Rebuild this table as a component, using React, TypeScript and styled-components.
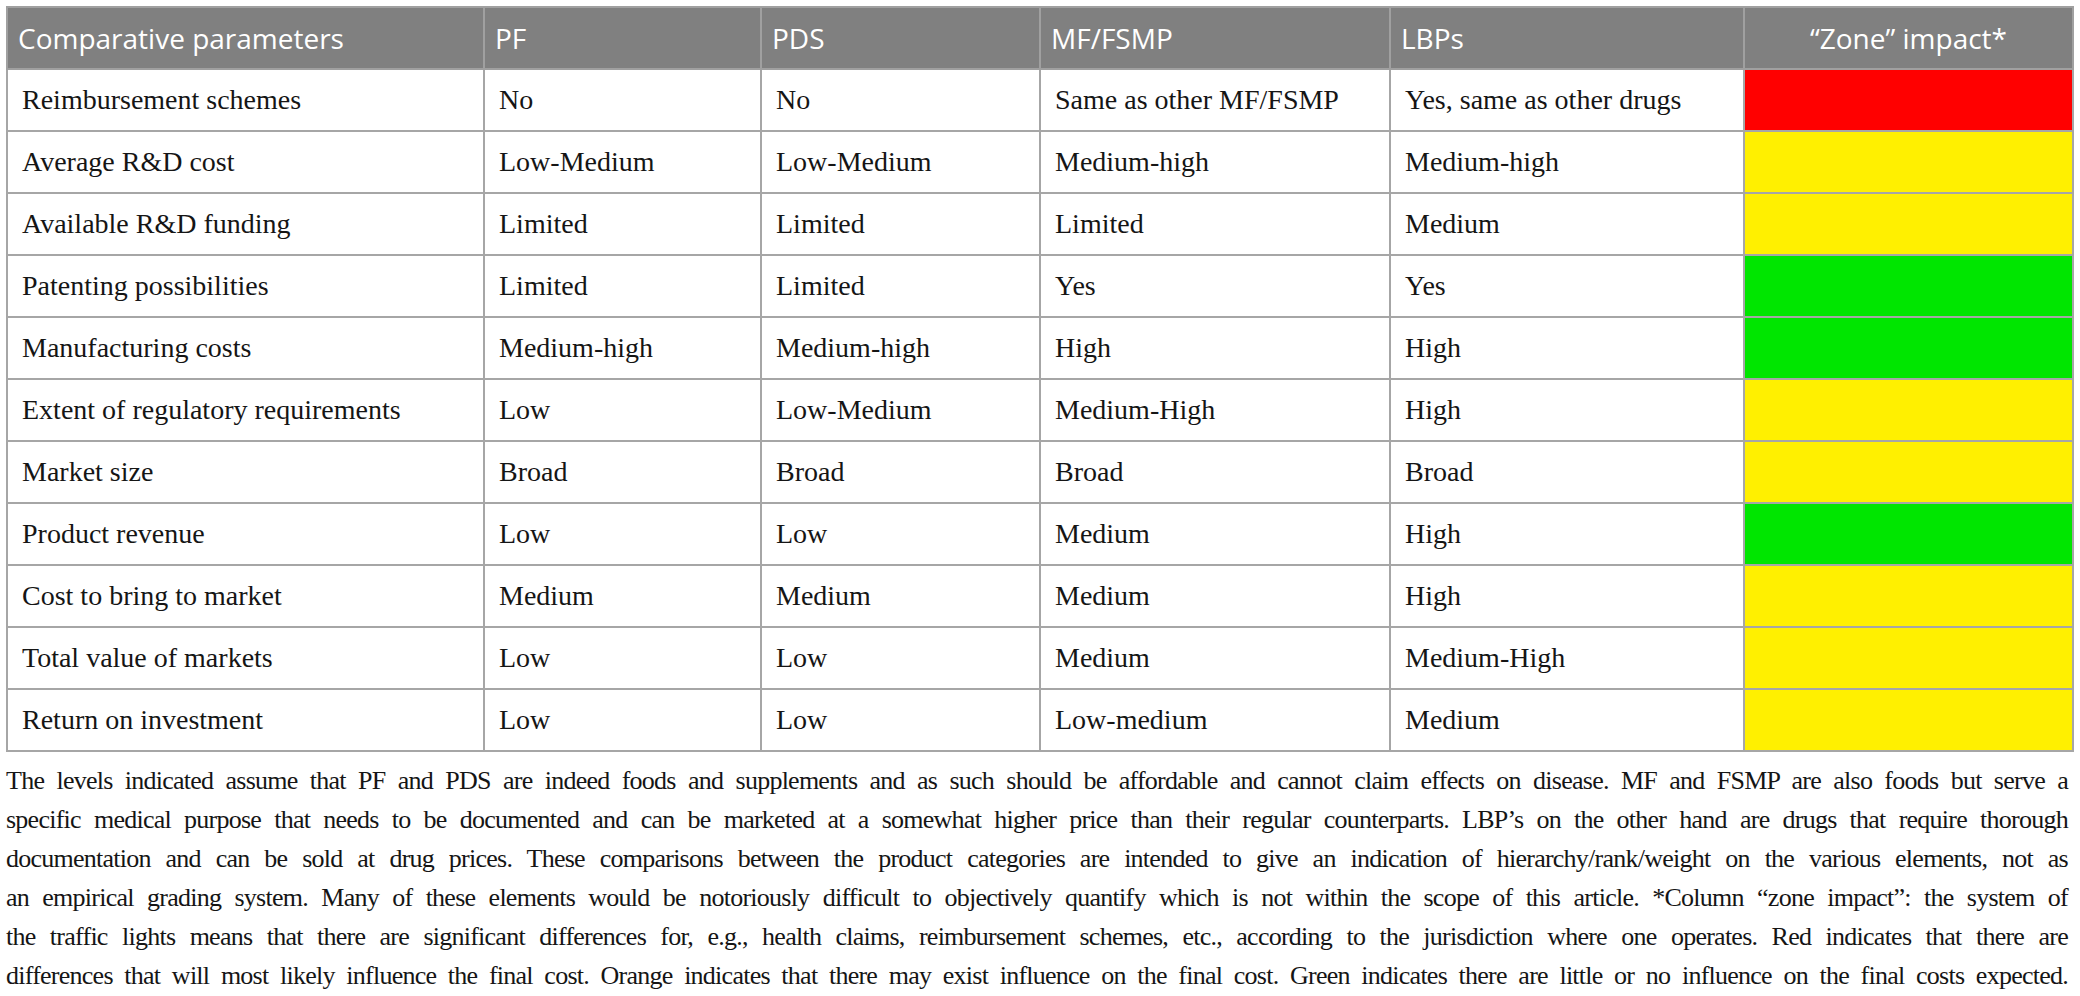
import React from 'react';
import styled, { createGlobalStyle } from 'styled-components';

const GlobalStyle = createGlobalStyle`
  html, body {
    margin: 0;
    padding: 0;
    background: #fff;
  }
`;

// Page wrapper around the table and its footnote
const Page = styled.div`
  padding: 6px 8px 0 6px;
  width: 2080px;
  box-sizing: border-box;
`;

const Table = styled.table`
  width: 2066px;
  border-collapse: collapse;
  table-layout: fixed;
  border: 2px solid #a6a6a6;
`;

const HeadCell = styled.th<{ $center?: boolean }>`
  height: 60px;
  padding: 0 10px;
  background-color: #808080;
  color: #fff;
  font-family: 'Open Sans', 'Noto Sans', sans-serif;
  font-size: 28px;
  font-weight: 400;
  text-align: ${(p) => (p.$center ? 'center' : 'left')};
  border: 2px solid #a0a0a0;
  white-space: nowrap;
`;

const Cell = styled.td`
  height: 60px;
  padding: 0 14px;
  font-family: 'Liberation Serif', 'Times New Roman', serif;
  font-size: 28px;
  color: #151515;
  border: 2px solid #a6a6a6;
  white-space: nowrap;
`;

// Traffic light cell for the zone impact column
const ZoneCell = styled.td<{ $zone: Zone }>`
  height: 60px;
  padding: 0;
  border: 2px solid #a6a6a6;
  background-color: ${(p) => zoneColors[p.$zone]};
`;

const Footnote = styled.div`
  margin-top: 9px;
  width: 2062px;
  font-family: 'Liberation Serif', 'Times New Roman', serif;
  font-size: 26px;
  letter-spacing: -0.75px;
  line-height: 39px;
  color: #151515;
`;

// Each printed line is justified to the full width
const FootLine = styled.div`
  white-space: nowrap;
  text-align: justify;
  text-align-last: justify;
`;

type Zone = 'red' | 'yellow' | 'green';

const zoneColors: Record<Zone, string> = {
  red: '#ff0000',
  yellow: '#fff000',
  green: '#00e600',
};

interface Row {
  label: string;
  pf: string;
  pds: string;
  mf: string;
  lbp: string;
  zone: Zone;
}

const rows: Row[] = [
  { label: 'Reimbursement schemes', pf: 'No', pds: 'No', mf: 'Same as other MF/FSMP', lbp: 'Yes, same as other drugs', zone: 'red' },
  { label: 'Average R&D cost', pf: 'Low-Medium', pds: 'Low-Medium', mf: 'Medium-high', lbp: 'Medium-high', zone: 'yellow' },
  { label: 'Available R&D funding', pf: 'Limited', pds: 'Limited', mf: 'Limited', lbp: 'Medium', zone: 'yellow' },
  { label: 'Patenting possibilities', pf: 'Limited', pds: 'Limited', mf: 'Yes', lbp: 'Yes', zone: 'green' },
  { label: 'Manufacturing costs', pf: 'Medium-high', pds: 'Medium-high', mf: 'High', lbp: 'High', zone: 'green' },
  { label: 'Extent of regulatory requirements', pf: 'Low', pds: 'Low-Medium', mf: 'Medium-High', lbp: 'High', zone: 'yellow' },
  { label: 'Market size', pf: 'Broad', pds: 'Broad', mf: 'Broad', lbp: 'Broad', zone: 'yellow' },
  { label: 'Product revenue', pf: 'Low', pds: 'Low', mf: 'Medium', lbp: 'High', zone: 'green' },
  { label: 'Cost to bring to market', pf: 'Medium', pds: 'Medium', mf: 'Medium', lbp: 'High', zone: 'yellow' },
  { label: 'Total value of markets', pf: 'Low', pds: 'Low', mf: 'Medium', lbp: 'Medium-High', zone: 'yellow' },
  { label: 'Return on investment', pf: 'Low', pds: 'Low', mf: 'Low-medium', lbp: 'Medium', zone: 'yellow' },
];

const footLines = [
  'The levels indicated assume that PF and PDS are indeed foods and supplements and as such should be affordable and cannot claim effects on disease. MF and FSMP are also foods but serve a',
  'specific medical purpose that needs to be documented and can be marketed at a somewhat higher price than their regular counterparts. LBP’s on the other hand are drugs that require thorough',
  'documentation and can be sold at drug prices. These comparisons between the product categories are intended to give an indication of hierarchy/rank/weight on the various elements, not as',
  'an empirical grading system. Many of these elements would be notoriously difficult to objectively quantify which is not within the scope of this article. *Column “zone impact”: the system of',
  'the traffic lights means that there are significant differences for, e.g., health claims, reimbursement schemes, etc., according to the jurisdiction where one operates. Red indicates that there are',
  'differences that will most likely influence the final cost. Orange indicates that there may exist influence on the final cost. Green indicates there are little or no influence on the final costs expected.',
];

const colWidths = [477, 277, 279, 350, 354, 329];

const App: React.FC = () => {
  return (
    <Page>
      <GlobalStyle />
      <Table>
        <colgroup>
          {colWidths.map((w, i) => (
            <col key={i} style={{ width: w }} />
          ))}
        </colgroup>
        <thead>
          <tr>
            <HeadCell>Comparative parameters</HeadCell>
            <HeadCell>PF</HeadCell>
            <HeadCell>PDS</HeadCell>
            <HeadCell>MF/FSMP</HeadCell>
            <HeadCell>LBPs</HeadCell>
            <HeadCell $center>“Zone” impact*</HeadCell>
          </tr>
        </thead>
        <tbody>
          {rows.map((row) => (
            <tr key={row.label}>
              <Cell>{row.label}</Cell>
              <Cell>{row.pf}</Cell>
              <Cell>{row.pds}</Cell>
              <Cell>{row.mf}</Cell>
              <Cell>{row.lbp}</Cell>
              <ZoneCell $zone={row.zone} />
            </tr>
          ))}
        </tbody>
      </Table>
      <Footnote>
        {footLines.map((line, i) => (
          <FootLine key={i}>{line}</FootLine>
        ))}
      </Footnote>
    </Page>
  );
};

export default App;
